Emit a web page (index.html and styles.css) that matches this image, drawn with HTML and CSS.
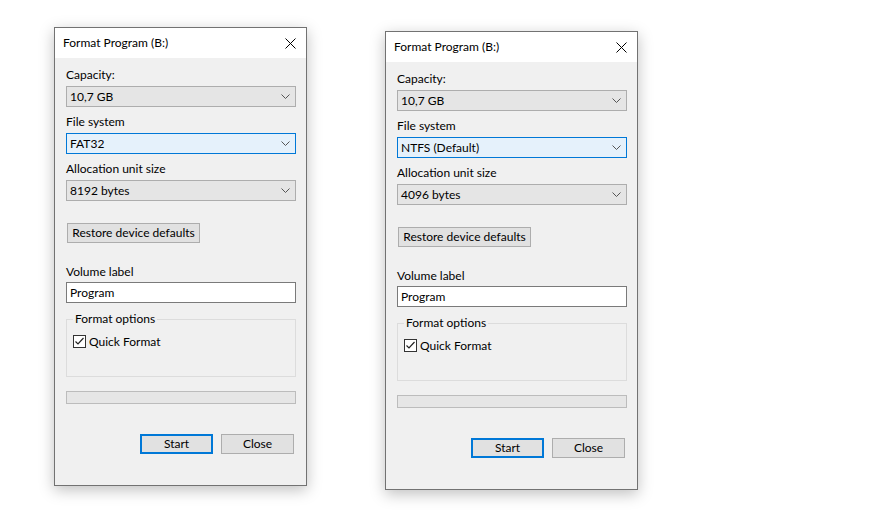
FILE: index.html
```html
<!DOCTYPE html>
<html lang="en">
<head>
  <meta charset="UTF-8">
  <title>Format Program (B:)</title>
  <link rel="stylesheet" href="styles.css">
</head>
<body>
  <main class="desk">
    <!-- FAT32 -->
    <div class="dialog">
      <div class="titlebar">
        <span class="title">Format Program (B:)</span>
        <svg class="close" width="11" height="11" viewBox="0 0 11 11"><path d="M0.5 0.5L10.5 10.5M10.5 0.5L0.5 10.5" stroke="#000" stroke-width="1"/></svg>
      </div>
      <div class="content">
        <div class="field">
          <label>Capacity:</label>
          <div class="combo"><span>10,7 GB</span><svg width="9" height="5" viewBox="0 0 9 5"><path d="M0.5 0.5L4.5 4.5L8.5 0.5" fill="none" stroke="#555"/></svg></div>
        </div>
        <div class="field">
          <label>File system</label>
          <div class="combo focus"><span>FAT32</span><svg width="9" height="5" viewBox="0 0 9 5"><path d="M0.5 0.5L4.5 4.5L8.5 0.5" fill="none" stroke="#555"/></svg></div>
        </div>
        <div class="field">
          <label>Allocation unit size</label>
          <div class="combo"><span>8192 bytes</span><svg width="9" height="5" viewBox="0 0 9 5"><path d="M0.5 0.5L4.5 4.5L8.5 0.5" fill="none" stroke="#555"/></svg></div>
        </div>
        <button class="btn restore">Restore device defaults</button>
        <div class="field volume">
          <label>Volume label</label>
          <div class="textbox">Program</div>
        </div>
        <fieldset class="options">
          <legend>Format options</legend>
          <div class="check"><span class="box"><svg width="11" height="11" viewBox="0 0 11 11"><path d="M1.5 5.5L4 8L9.5 2" fill="none" stroke="#222" stroke-width="1.2"/></svg></span>Quick Format</div>
        </fieldset>
        <div class="progress"></div>
        <div class="actions">
          <button class="btn default">Start</button>
          <button class="btn">Close</button>
        </div>
      </div>
    </div>

    <!-- NTFS -->
    <div class="dialog second">
      <div class="titlebar">
        <span class="title">Format Program (B:)</span>
        <svg class="close" width="11" height="11" viewBox="0 0 11 11"><path d="M0.5 0.5L10.5 10.5M10.5 0.5L0.5 10.5" stroke="#000" stroke-width="1"/></svg>
      </div>
      <div class="content">
        <div class="field">
          <label>Capacity:</label>
          <div class="combo"><span>10,7 GB</span><svg width="9" height="5" viewBox="0 0 9 5"><path d="M0.5 0.5L4.5 4.5L8.5 0.5" fill="none" stroke="#555"/></svg></div>
        </div>
        <div class="field">
          <label>File system</label>
          <div class="combo focus"><span>NTFS (Default)</span><svg width="9" height="5" viewBox="0 0 9 5"><path d="M0.5 0.5L4.5 4.5L8.5 0.5" fill="none" stroke="#555"/></svg></div>
        </div>
        <div class="field">
          <label>Allocation unit size</label>
          <div class="combo"><span>4096 bytes</span><svg width="9" height="5" viewBox="0 0 9 5"><path d="M0.5 0.5L4.5 4.5L8.5 0.5" fill="none" stroke="#555"/></svg></div>
        </div>
        <button class="btn restore">Restore device defaults</button>
        <div class="field volume">
          <label>Volume label</label>
          <div class="textbox">Program</div>
        </div>
        <fieldset class="options">
          <legend>Format options</legend>
          <div class="check"><span class="box"><svg width="11" height="11" viewBox="0 0 11 11"><path d="M1.5 5.5L4 8L9.5 2" fill="none" stroke="#222" stroke-width="1.2"/></svg></span>Quick Format</div>
        </fieldset>
        <div class="progress"></div>
        <div class="actions">
          <button class="btn default">Start</button>
          <button class="btn">Close</button>
        </div>
      </div>
    </div>
  </main>
</body>
</html>
```

FILE: styles.css
```css
:root {
  --face: #f0f0f0;
  --frame: #727272;
  --accent: #0078d7;
  --combo: #e5e5e5;
  --line: #adadad;
}

body {
  margin: 0;
  min-height: 525px;
  background: #fff;
  color: #000;
  font-family: 'Segoe UI', Lato, sans-serif;
  font-size: 12px;
}

.desk {
  display: flex;
  align-items: flex-start;
  gap: 78px;
  padding: 27px 0 0 54px;
}

.dialog {
  width: 253px;
  box-sizing: border-box;
  background: var(--face);
  border: 1px solid var(--frame);
  box-shadow: 0 4px 14px rgba(0,0,0,0.25);
}

.dialog.second {
  margin-top: 4px;
}

.titlebar {
  height: 30px;
  background: #fff;
  display: flex;
  align-items: center;
  justify-content: space-between;
  padding: 0 10px 0 8px;
}

.title {
  line-height: 16px;
}

.content {
  display: flex;
  flex-direction: column;
  padding: 9px 10px 31px 11px;
}

.field {
  display: flex;
  flex-direction: column;
  margin-bottom: 7px;
}

.field label {
  line-height: 16px;
  margin-bottom: 3px;
}

.combo {
  height: 21px;
  box-sizing: border-box;
  background: var(--combo);
  border: 1px solid var(--line);
  display: flex;
  align-items: center;
  justify-content: space-between;
  padding: 0 5px 0 3px;
}

.combo.focus {
  background: #e5f1fb;
  border-color: var(--accent);
}

.btn {
  font: inherit;
  color: #000;
  height: 20px;
  box-sizing: border-box;
  background: #e1e1e1;
  border: 1px solid var(--line);
  padding: 0;
  line-height: 16px;
}

.restore {
  align-self: flex-start;
  width: 133px;
  margin: 15px 0 0 1px;
}

.volume {
  margin-top: 21px;
  margin-bottom: 0;
}

.volume label {
  margin-bottom: 2px;
}

.textbox {
  height: 21px;
  box-sizing: border-box;
  background: #fff;
  border: 1px solid #7a7a7a;
  padding: 0 3px;
  line-height: 19px;
}

.options {
  margin: 8px 0 0;
  padding: 0 6px 28px;
  border: 1px solid #dcdcdc;
}

.options legend {
  padding: 0 2px;
  line-height: 16px;
}

.check {
  display: flex;
  align-items: center;
  gap: 3px;
  margin-top: 8px;
  line-height: 13px;
}

.box {
  width: 13px;
  height: 13px;
  box-sizing: border-box;
  border: 1px solid #333;
  background: #fff;
  display: flex;
  align-items: center;
  justify-content: center;
}

.progress {
  height: 13px;
  box-sizing: border-box;
  margin-top: 14px;
  background: #e6e6e6;
  border: 1px solid #bcbcbc;
}

.actions {
  display: flex;
  justify-content: flex-end;
  gap: 8px;
  margin: 30px 2px 0 0;
}

.actions .btn {
  width: 73px;
}

.btn.default {
  border: 2px solid var(--accent);
}
```
